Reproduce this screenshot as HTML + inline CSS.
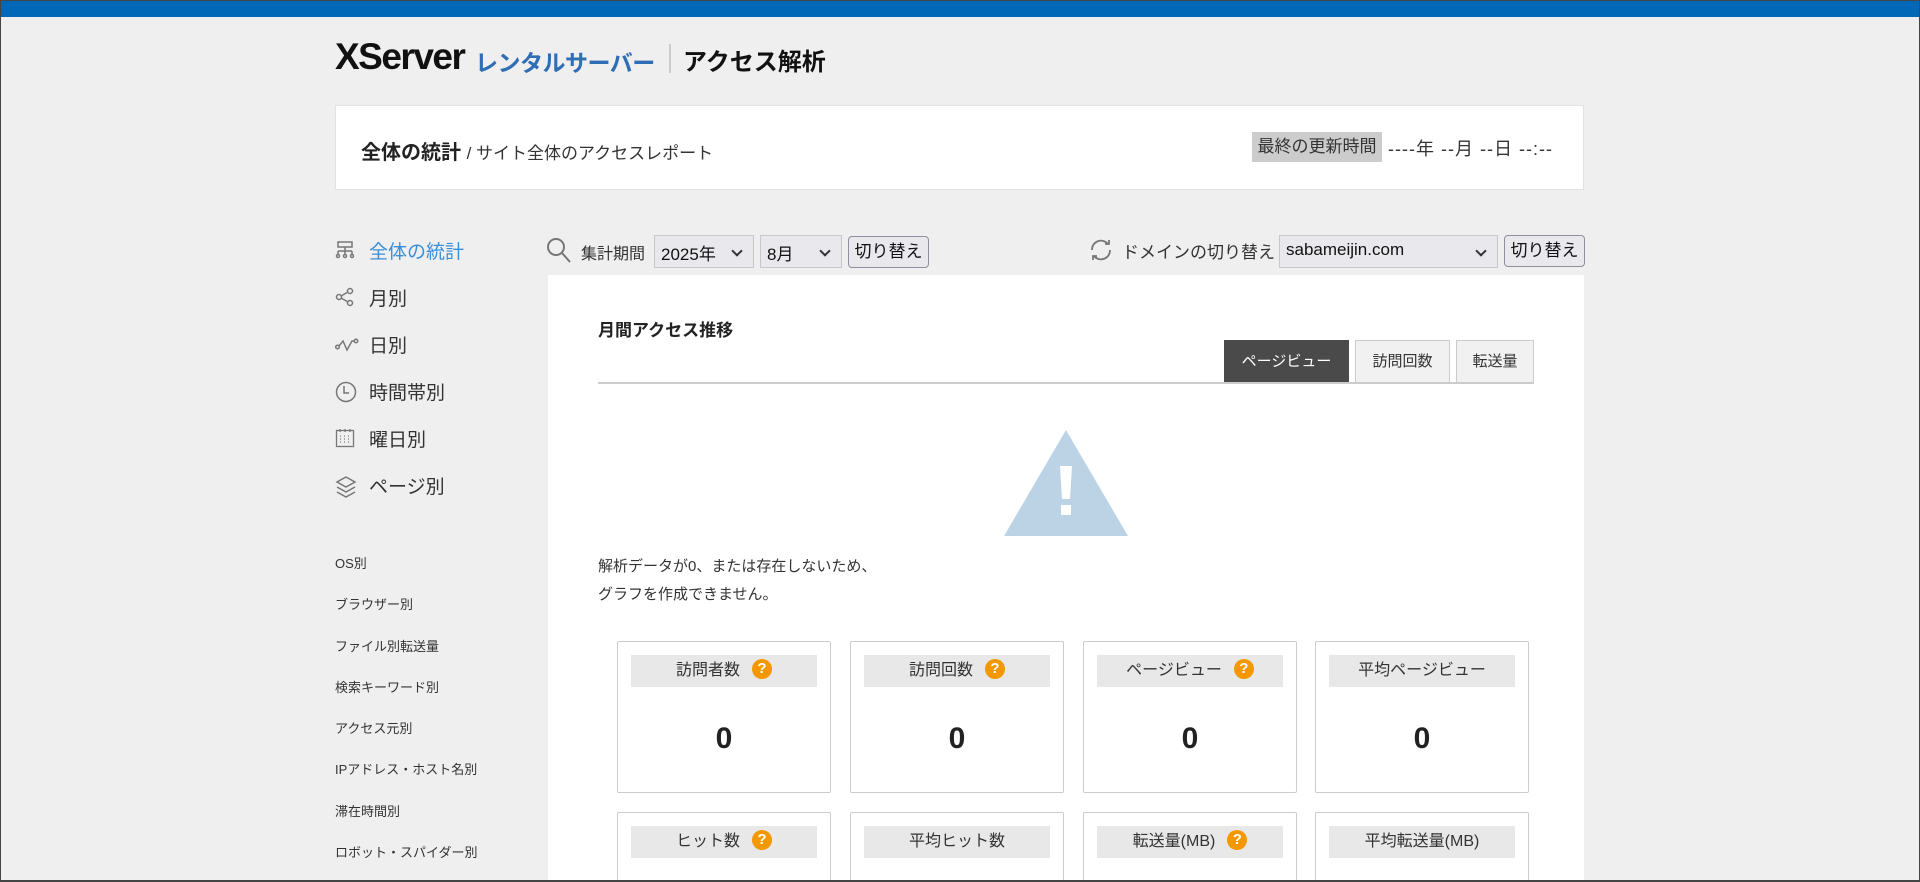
<!DOCTYPE html>
<html style="overflow:hidden;height:882px"><head><meta charset="utf-8"><style>
*{margin:0;padding:0;box-sizing:border-box}
body{width:1920px;height:882px;overflow:hidden;background:#efefef;font-family:"Liberation Sans","Noto Sans CJK JP",sans-serif;color:#333;position:relative}
.a{position:absolute;white-space:nowrap}
.frame{position:absolute;left:0;top:0;width:1920px;height:882px;border:1px solid #444;border-bottom:2px solid #444;pointer-events:none}
.sel{position:absolute;background:#e9e9ed;border:1px solid #c8c8c8;font-size:17px;color:#111;padding:4px 6px;height:33px}
.sel:after{content:"";position:absolute;right:12px;top:11px;width:6px;height:6px;border-right:2px solid #333;border-bottom:2px solid #333;transform:rotate(45deg)}
.btn{position:absolute;background:#e9e9ed;border:1px solid #8f8f9d;border-radius:4px;font-size:17px;color:#111;text-align:center;height:32px;line-height:30px}
.nav{position:absolute;left:335px;font-size:19px;color:#333}
.nav svg{position:absolute;left:0;top:3px}
.nav span{position:absolute;left:34px;top:0;white-space:nowrap}
.sm{position:absolute;left:335px;font-size:13px;color:#333}
.card{position:absolute;width:214px;height:152px;background:#fff;border:1px solid #ccc;border-radius:2px}
.card .h{position:absolute;left:13px;right:13px;top:13px;height:32px;background:#e8e8e8;font-size:16px;text-align:center;line-height:32px;color:#333}
.q{display:inline-block;width:20px;height:20px;border-radius:50%;background:#f39800;color:#fff;font-weight:bold;font-size:15px;line-height:20px;text-align:center;vertical-align:middle;margin-left:12px;margin-top:-4px}
.card .v{position:absolute;left:0;right:0;top:80px;text-align:center;font-size:30px;font-weight:bold;color:#222}
.tab{position:absolute;top:340px;height:42px;line-height:42px;text-align:center;font-size:15px;background:#f1f1f1;border:1px solid #ccc;border-bottom:none;color:#333}
</style></head><body>
<div class="a" style="left:0;top:0;width:1920px;height:17px;background:#0068b7"></div>
<div class="a" style="left:335px;top:36px;font-size:37px;font-weight:bold;color:#111;letter-spacing:-1.5px">XServer</div>
<div class="a" style="left:475px;top:44px;font-size:23px;font-weight:bold;color:#2f6db5;letter-spacing:-0.5px">レンタルサーバー</div>
<div class="a" style="left:669px;top:44px;width:2px;height:29px;background:#ccc"></div>
<div class="a" style="left:683px;top:42px;font-size:24px;font-weight:bold;color:#111">アクセス解析</div>

<div class="a" style="left:335px;top:105px;width:1249px;height:85px;background:#fff;border:1px solid #e2e2e2"></div>
<div class="a" style="left:361px;top:136px;font-size:20px;font-weight:bold;color:#222">全体の統計 <span style="font-weight:normal;font-size:17px;color:#333">/ サイト全体のアクセスレポート</span></div>
<div class="a" style="left:1252px;top:132px;width:130px;height:30px;background:#ccc;font-size:17px;line-height:30px;text-align:center;color:#333">最終の更新時間</div>
<div class="a" style="left:1388px;top:135px;font-size:18px;letter-spacing:1px;color:#333">----年 --月 --日 --:--</div>

<div class="nav" style="top:237px;color:#3a8fd8"><svg width="20" height="20" viewBox="0 0 20 20" fill="none" stroke="#777" stroke-width="1.5"><rect x="3" y="2" width="14" height="5"/><path d="M10 7v4M3 11h14M3 11v3M10 11v3M17 11v3"/><circle cx="3" cy="16" r="1.5"/><circle cx="10" cy="16" r="1.5"/><circle cx="17" cy="16" r="1.5"/></svg><span>全体の統計</span></div>
<div class="nav" style="top:284px"><svg width="20" height="20" viewBox="0 0 20 20" fill="none" stroke="#777" stroke-width="1.5"><circle cx="4" cy="10" r="2.5"/><circle cx="15" cy="4" r="2.5"/><circle cx="15" cy="16" r="2.5"/><path d="M6 9l7-4M6 11l7 4"/></svg><span>月別</span></div>
<div class="nav" style="top:331px"><svg width="24" height="20" viewBox="0 0 24 20" fill="none" stroke="#777" stroke-width="1.5"><circle cx="2.5" cy="13" r="1.8"/><path d="M4 12l4-5 4 9 5-9 3 0"/><circle cx="21" cy="7" r="1.8"/></svg><span>日別</span></div>
<div class="nav" style="top:378px"><svg width="22" height="22" viewBox="0 0 22 22" fill="none" stroke="#777" stroke-width="1.5"><circle cx="11" cy="11" r="9.5"/><path d="M9 5v7h5"/></svg><span>時間帯別</span></div>
<div class="nav" style="top:425px"><svg width="20" height="20" viewBox="0 0 20 20" fill="none" stroke="#777" stroke-width="1.3"><rect x="1.5" y="2.5" width="17" height="16"/><path d="M5 1v3M10 1v3M15 1v3M5 8h1M9 8h1M13 8h1M5 11h1M9 11h1M13 11h1M5 14h1M9 14h1M13 14h1"/></svg><span>曜日別</span></div>
<div class="nav" style="top:472px"><svg width="22" height="24" viewBox="0 0 22 24" fill="none" stroke="#777" stroke-width="1.5"><path d="M11 2l9 5-9 5-9-5z"/><path d="M2 12l9 5 9-5M2 17l9 5 9-5"/></svg><span>ページ別</span></div>

<div class="sm" style="top:553px">OS別</div>
<div class="sm" style="top:594px">ブラウザー別</div>
<div class="sm" style="top:636px">ファイル別転送量</div>
<div class="sm" style="top:677px">検索キーワード別</div>
<div class="sm" style="top:718px">アクセス元別</div>
<div class="sm" style="top:759px">IPアドレス・ホスト名別</div>
<div class="sm" style="top:801px">滞在時間別</div>
<div class="sm" style="top:842px">ロボット・スパイダー別</div>

<svg class="a" style="left:546px;top:237px" width="26" height="27" viewBox="0 0 26 27" fill="none" stroke="#777" stroke-width="2"><circle cx="10" cy="10" r="8"/><path d="M16 16l8 9"/></svg>
<div class="a" style="left:581px;top:240px;font-size:16px;color:#333">集計期間</div>
<div class="sel" style="left:654px;top:235px;width:100px">2025年</div>
<div class="sel" style="left:760px;top:235px;width:82px">8月</div>
<div class="btn" style="left:848px;top:236px;width:81px">切り替え</div>

<svg class="a" style="left:1088px;top:238px" width="26" height="24" viewBox="0 0 26 24" fill="none" stroke="#777" stroke-width="1.8"><path d="M4 12a9 9 0 0 1 16-6"/><path d="M22 12a9 9 0 0 1-16 6"/><path d="M17 6h4V2M9 18H5v4"/></svg>
<div class="a" style="left:1122px;top:238px;font-size:17px;color:#333">ドメインの切り替え</div>
<div class="sel" style="left:1279px;top:235px;width:219px">sabameijin.com</div>
<div class="btn" style="left:1504px;top:235px;width:81px">切り替え</div>

<div class="a" style="left:548px;top:275px;width:1036px;height:607px;background:#fff"></div>
<div class="a" style="left:598px;top:316px;font-size:17px;font-weight:bold;color:#222">月間アクセス推移</div>
<div class="tab" style="left:1224px;width:125px;background:#4a4a4a;color:#fff;border-color:#4a4a4a">ページビュー</div>
<div class="tab" style="left:1355px;width:95px">訪問回数</div>
<div class="tab" style="left:1456px;width:78px">転送量</div>
<div class="a" style="left:598px;top:382px;width:936px;height:2px;background:#ccc"></div>

<svg class="a" style="left:1004px;top:430px" width="124" height="106" viewBox="0 0 124 106"><path d="M62 0L124 106H0z" fill="#bcd3e6"/><path d="M56 36h12l-2 33h-8z" fill="#fff"/><rect x="57" y="75" width="10" height="10" fill="#fff"/></svg>
<div class="a" style="left:598px;top:553px;font-size:15px;line-height:28px;color:#333">解析データが0、または存在しないため、<br>グラフを作成できません。</div>

<div class="card" style="left:617px;top:641px"><div class="h">訪問者数<span class="q">?</span></div><div class="v">0</div></div>
<div class="card" style="left:850px;top:641px"><div class="h">訪問回数<span class="q">?</span></div><div class="v">0</div></div>
<div class="card" style="left:1083px;top:641px"><div class="h">ページビュー<span class="q">?</span></div><div class="v">0</div></div>
<div class="card" style="left:1315px;top:641px"><div class="h">平均ページビュー</div><div class="v">0</div></div>
<div class="card" style="left:617px;top:812px;height:70px"><div class="h">ヒット数<span class="q">?</span></div></div>
<div class="card" style="left:850px;top:812px;height:70px"><div class="h">平均ヒット数</div></div>
<div class="card" style="left:1083px;top:812px;height:70px"><div class="h">転送量(MB)<span class="q">?</span></div></div>
<div class="card" style="left:1315px;top:812px;height:70px"><div class="h">平均転送量(MB)</div></div>
<div class="frame"></div>
</body></html>
